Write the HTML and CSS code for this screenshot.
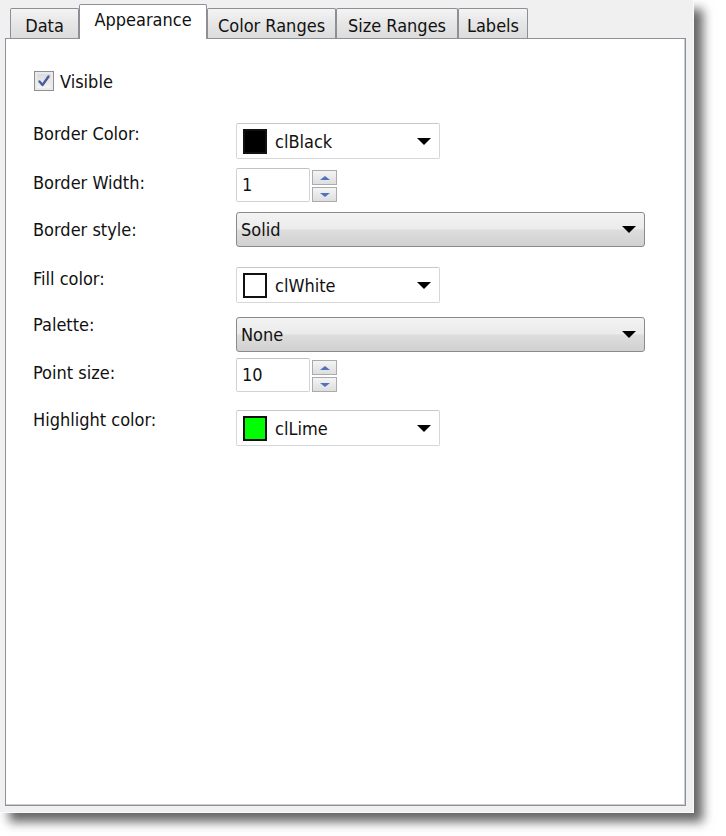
FILE: index.html
```html
<!DOCTYPE html>
<html>
  <head>
    <meta charset="utf-8">
    <title>Series properties</title>
    <link rel="stylesheet" href="styles.css">
  </head>
  <body>
    <div class="window">
      <!-- tab strip -->
      <div class="tabs">
        <div class="tab tab-data">Data</div>
        <div class="tab tab-appearance active">Appearance</div>
        <div class="tab tab-color">Color Ranges</div>
        <div class="tab tab-size">Size Ranges</div>
        <div class="tab tab-labels">Labels</div>
      </div>

      <div class="page">
        <label class="check-row">
          <span class="checkbox">
            <svg width="14" height="14" viewBox="0 0 14 14"><path d="M2.5 7.5 L5.5 11 L11.5 2.5" fill="none" stroke="#4b5c9e" stroke-width="2.4" stroke-linecap="round" stroke-linejoin="round"/></svg>
          </span>
          Visible
        </label>

        <div class="row r1">
          <span class="lbl">Border Color:</span>
          <div class="color-combo">
            <span class="swatch sw-black"></span>
            <span class="combo-text">clBlack</span>
            <span class="arrow"></span>
          </div>
        </div>

        <div class="row r2">
          <span class="lbl">Border Width:</span>
          <div class="spin">
            <div class="spin-edit">1</div>
            <div class="spin-btns">
              <span class="spin-btn up"></span>
              <span class="spin-btn down"></span>
            </div>
          </div>
        </div>

        <div class="row r3">
          <span class="lbl">Border style:</span>
          <div class="flat-combo">
            <span class="combo-text">Solid</span>
            <span class="arrow"></span>
          </div>
        </div>

        <div class="row r4">
          <span class="lbl">Fill color:</span>
          <div class="color-combo">
            <span class="swatch sw-white"></span>
            <span class="combo-text">clWhite</span>
            <span class="arrow"></span>
          </div>
        </div>

        <div class="row r5">
          <span class="lbl">Palette:</span>
          <div class="flat-combo">
            <span class="combo-text">None</span>
            <span class="arrow"></span>
          </div>
        </div>

        <div class="row r6">
          <span class="lbl">Point size:</span>
          <div class="spin">
            <div class="spin-edit">10</div>
            <div class="spin-btns">
              <span class="spin-btn up"></span>
              <span class="spin-btn down"></span>
            </div>
          </div>
        </div>

        <div class="row r7">
          <span class="lbl">Highlight color:</span>
          <div class="color-combo">
            <span class="swatch sw-lime"></span>
            <span class="combo-text">clLime</span>
            <span class="arrow"></span>
          </div>
        </div>
      </div>
    </div>
  </body>
</html>
```

FILE: styles.css
```css
body {
  margin: 0;
  min-height: 836px;
  background: #fff;
  font-family: "DejaVu Sans Condensed", "DejaVu Sans", sans-serif;
  font-stretch: condensed;
  font-size: 18px;
  color: #111; }
.window {
  width: 694px;
  height: 813px;
  box-sizing: border-box;
  background: #f0f0f0;
  padding: 4px 7px 0 5px;
  border-right: 1px solid #fafafa;
  border-bottom: 1px solid #fafafa;
  box-shadow: 9px 9px 10px rgba(0,0,0,0.6); }

/* tabs */
.tabs {
  display: flex;
  align-items: flex-end;
  height: 34px;
  padding-left: 5px;
  position: relative;
  z-index: 1; }
.tab {
  box-sizing: border-box;
  height: 30px;
  line-height: 30px;
  padding-top: 2px;
  text-align: center;
  border: 1px solid #8c8f98;
  border-bottom: none;
  border-radius: 2px 2px 0 0;
  background: linear-gradient(#f4f4f4, #e6e6e6 50%, #dcdcdc); }
.tab.active {
  height: 35px;
  line-height: 30px;
  padding-top: 0;
  margin-bottom: -1px;
  background: #fff; }
.tab-data { width: 69px; }
.tab-appearance { width: 128px; }
.tab-color { width: 129px; }
.tab-size { width: 122px; }
.tab-labels { width: 70px; }

.page {
  box-sizing: border-box;
  height: 768px;
  background: #fff;
  border: 1px solid #8e9199;
  box-shadow: inset -1px -1px 0 #c8ccd3;
  padding-left: 27px; }

.check-row {
  display: flex;
  align-items: center;
  gap: 6px;
  margin-top: 32px;
  margin-left: 1px;
  height: 20px; }
.checkbox {
  box-sizing: border-box;
  width: 20px;
  height: 20px;
  border: 1px solid #8f8f8f;
  background: linear-gradient(#d8d8d8, #f6f6f6);
  box-shadow: inset 0 0 0 2px #eaeaea;
  display: flex;
  align-items: center;
  justify-content: center; }

/* form rows */
.row {
  display: flex;
  align-items: flex-start; }
.lbl {
  width: 203px;
  line-height: 20px;
  flex: none; }
.r1 { margin-top: 32px; }
.r1 .lbl { margin-top: 1px; }
.r2 { margin-top: 9px; }
.r2 .lbl { margin-top: 5px; }
.r3 { margin-top: 10px; }
.r3 .lbl { margin-top: 8px; }
.r4 { margin-top: 20px; }
.r4 .lbl { margin-top: 2px; }
.r5 { margin-top: 14px; }
.r5 .lbl { margin-top: -2px; }
.r6 { margin-top: 6px; }
.r6 .lbl { margin-top: 5px; }
.r7 { margin-top: 18px; }

.arrow {
  width: 0;
  height: 0;
  border-left: 7px solid transparent;
  border-right: 7px solid transparent;
  border-top: 7px solid #000;
  margin-left: auto; }

.color-combo {
  box-sizing: border-box;
  width: 204px;
  height: 36px;
  display: flex;
  align-items: center;
  border: 1px solid #d3d6dc;
  border-top-color: #c4c8ce;
  border-radius: 2px;
  padding: 0 8px 0 6px; }
.swatch {
  box-sizing: border-box;
  width: 24px;
  height: 25px;
  border: 2px solid #111;
  margin-right: 8px; }
.sw-black { background: #000; }
.sw-white { background: #fff; }
.sw-lime { background: #00ff00; }

.flat-combo {
  box-sizing: border-box;
  width: 409px;
  height: 35px;
  display: flex;
  align-items: center;
  border: 1px solid #8a8a8a;
  border-radius: 3px;
  padding: 0 8px 0 4px;
  background: linear-gradient(#f3f3f3, #ebebeb 48%, #dddddd 52%, #d1d1d1); }

.spin {
  display: flex;
  align-items: flex-start; }
.spin-edit {
  box-sizing: border-box;
  width: 74px;
  height: 34px;
  line-height: 32px;
  padding-left: 5px;
  border: 1px solid #cfd3d9;
  border-top-color: #bfc3c9;
  border-radius: 2px; }
.spin-btns {
  display: flex;
  flex-direction: column;
  gap: 2px;
  margin-left: 2px;
  margin-top: 2px; }
.spin-btn {
  box-sizing: border-box;
  width: 25px;
  height: 15px;
  border: 1px solid #a9abae;
  background: linear-gradient(#f4f4f4, #dedede);
  display: flex;
  align-items: center;
  justify-content: center; }
.spin-btn::after {
  content: "";
  width: 0;
  height: 0;
  border-left: 5px solid transparent;
  border-right: 5px solid transparent; }
.spin-btn.up::after { border-bottom: 4px solid #4f72bb; }
.spin-btn.down::after { border-top: 4px solid #4f72bb; }
```
